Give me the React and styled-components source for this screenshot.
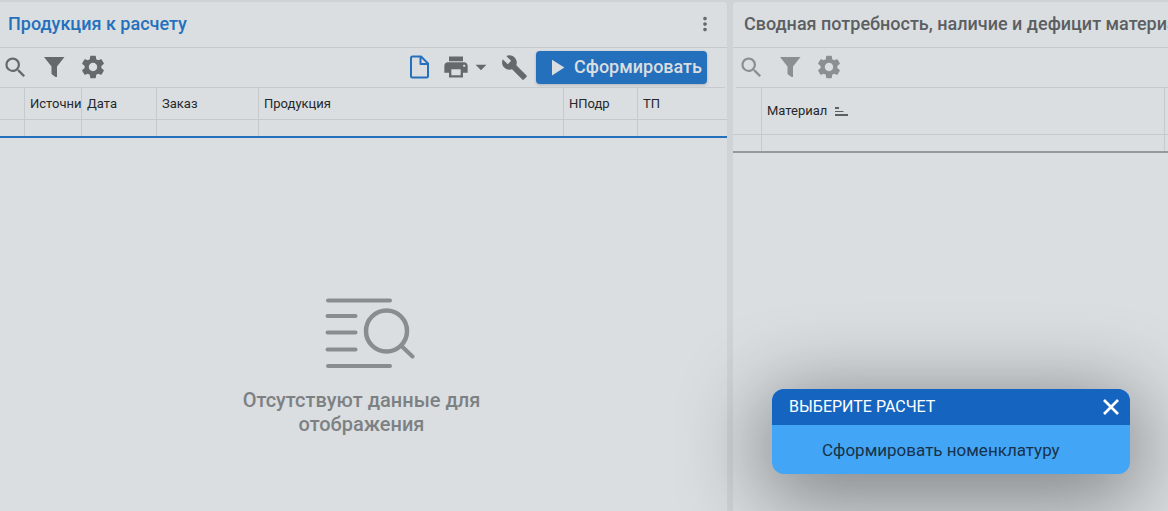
import React from 'react';
import styled, { createGlobalStyle } from 'styled-components';
import {
  MdSearch,
  MdSettings,
  MdPrint,
  MdBuild,
  MdMoreVert,
  MdArrowDropDown,
  MdPlayArrow,
} from 'react-icons/md';

const GlobalStyle = createGlobalStyle`
  * { box-sizing: border-box; }
  html, body, #root { height: 100%; }
  body {
    margin: 0;
    overflow: hidden;
    background: #cfd3d6;
    color: #25282a;
    font-family: Roboto, "Liberation Sans", sans-serif;
  }
  button { font: inherit; color: inherit; }
`;

const Workspace = styled.main`
  position: relative;
  display: grid;
  grid-template-columns: minmax(0, 727fr) minmax(0, 435fr);
  gap: 6px;
  height: 100%;
  padding-top: 2px;
`;

const Panel = styled.section`
  display: flex;
  flex-direction: column;
  min-width: 0;
  overflow: hidden;
  background: #dadee1;
  border-radius: ${(p) => (p.$side === 'left' ? '0 4px 0 0' : '4px 0 0 0')};
`;

const PanelHeader = styled.header`
  display: flex;
  align-items: center;
  justify-content: space-between;
  height: 46px;
  padding: 0 11px 2px ${(p) => p.$inset}px;
  border-bottom: 1px solid #c6cacd;
`;

const PanelTitle = styled.h2`
  margin: 0;
  font-size: 18px;
  line-height: 24px;
  font-weight: 500;
  white-space: nowrap;
  color: ${(p) => (p.$active ? '#2470bd' : '#5c5f61')};
`;

const Toolbar = styled.div`
  display: flex;
  align-items: center;
  justify-content: space-between;
  height: 40px;
  margin: ${(p) => (p.$side === 'left' ? '0 2px 0 0' : '0 0 0 3px')};
  padding: 0 18px 1px 1px;
  border-bottom: 1px solid #c6cacd;
  color: ${(p) => (p.$muted ? '#8b8f91' : '#66696b')};
`;

const ToolGroup = styled.div`
  display: flex;
  align-items: center;
  gap: ${(p) => p.$gap}px;
`;

const IconButton = styled.button`
  display: flex;
  align-items: center;
  justify-content: center;
  width: ${(p) => p.$width || 28}px;
  height: 28px;
  padding: 0;
  border: 0;
  background: none;
  color: ${(p) => (p.$accent ? '#2470bd' : 'inherit')};
  cursor: pointer;
`;

const PrintButton = styled(IconButton)`
  width: 50px;
  justify-content: flex-start;
  & > svg { flex: none; }
  & > svg + svg { margin-left: -2px; }
`;

const PrimaryButton = styled.button`
  display: flex;
  align-items: center;
  gap: 4px;
  height: 33px;
  padding: 0 5px 0 7px;
  border: 0;
  border-radius: 4px;
  background: #2470bd;
  box-shadow: 0 1px 3px rgba(0, 0, 0, 0.2);
  color: #dadee1;
  font-size: 18px;
  font-weight: 500;
  line-height: 24px;
  cursor: pointer;
`;

const DataTable = styled.table`
  width: 100%;
  table-layout: fixed;
  border-collapse: separate;
  border-spacing: 0;
  border-bottom: 2px solid ${(p) => (p.$active ? '#2470bd' : '#95999b')};
`;

const HeadCell = styled.th`
  height: ${(p) => p.$height}px;
  padding: 0 0 0 5px;
  border-right: 1px solid #c6cacd;
  border-bottom: 1px solid #c6cacd;
  font-size: 13px;
  line-height: 16px;
  font-weight: 400;
  text-align: left;
  white-space: nowrap;
  overflow: hidden;
  &:last-child { border-right: 0; }
`;

const FilterCell = styled.td`
  height: 16px;
  padding: 0;
  border-right: 1px solid #c6cacd;
  &:last-child { border-right: 0; }
`;

const SortLabel = styled.span`
  display: flex;
  align-items: center;
  gap: 8px;
`;

const EmptyState = styled.div`
  display: flex;
  flex-direction: column;
  align-items: center;
  padding: 160px 4px 0 0;
  gap: 19px;
`;

const EmptyFigure = styled.div`
  display: flex;
  padding-left: 16px;
`;

const EmptyText = styled.p`
  width: 280px;
  margin: 0;
  color: #7d8183;
  font-size: 20px;
  line-height: 24px;
  font-weight: 500;
  text-align: center;
`;

const Dialog = styled.section`
  position: absolute;
  right: 38px;
  bottom: 37px;
  width: 358px;
  border-radius: 12px;
  background: #42a5f5;
  box-shadow: 0 16px 84px 10px rgba(0, 0, 0, 0.42);
`;

const DialogHeader = styled.header`
  display: flex;
  align-items: center;
  justify-content: space-between;
  height: 36px;
  padding: 0 5px 1px 17px;
  border-radius: 12px 12px 0 0;
  background: #1565c0;
  color: #ffffff;
`;

const DialogTitle = styled.h2`
  margin: 0;
  font-size: 16px;
  line-height: 24px;
  font-weight: 400;
`;

const DialogAction = styled.button`
  display: block;
  width: 100%;
  height: 49px;
  padding: 0 50px;
  border: 0;
  background: none;
  color: #17324a;
  font-size: 17px;
  line-height: 24px;
  text-align: left;
  cursor: pointer;
`;

function FilterIcon() {
  return (
    <svg width="22" height="22" viewBox="0 0 22 22" fill="currentColor" aria-hidden="true">
      <path d="M1 1h20.500l-7.500 9.500v10.500h-1.500l-4-3v-7.500z" />
    </svg>
  );
}

function FileIcon() {
  return (
    <svg width="20" height="24" viewBox="0 0 20 24" fill="none" stroke="currentColor" strokeWidth="2" strokeLinejoin="round" aria-hidden="true">
      <path d="M2.500 1.500h8.500l7 7v12.500a1.500 1.500 0 0 1-1.500 1.500h-14a1.500 1.500 0 0 1-1.500-1.500v-18a1.500 1.500 0 0 1 1.500-1.500z" />
      <path d="M10.500 2v7h7.500" />
    </svg>
  );
}

function CloseIcon() {
  return (
    <svg width="16" height="16" viewBox="0 0 16 16" fill="none" stroke="currentColor" strokeWidth="2.700" aria-hidden="true">
      <path d="M1 1l14 14M15 1L1 15" />
    </svg>
  );
}

function SortIcon() {
  return (
    <svg width="13" height="9" viewBox="0 0 13 9" fill="none" stroke="#5d6062" aria-hidden="true">
      <path d="M0 1h4" strokeWidth="2" />
      <path d="M0 4.500h8.500" strokeWidth="1" />
      <path d="M0 8h13" strokeWidth="2" />
    </svg>
  );
}

function NoDataIcon() {
  return (
    <svg width="90" height="71" viewBox="0 0 90 71" fill="none" stroke="#898d8f" strokeWidth="4" strokeLinecap="round" aria-hidden="true">
      <path d="M3 2.500h62M2.500 18h28M2.500 34.500h28M2.500 51.500h28M3 68h62" />
      <circle cx="61.500" cy="33" r="20.500" strokeWidth="4.500" />
      <path d="M76.500 48l11 10.500" />
    </svg>
  );
}

function GridTools() {
  return (
    <ToolGroup $gap={11}>
      <IconButton aria-label="Поиск"><MdSearch size={27} /></IconButton>
      <IconButton aria-label="Фильтр"><FilterIcon /></IconButton>
      <IconButton aria-label="Настройки"><MdSettings size={28} /></IconButton>
    </ToolGroup>
  );
}

function Grid({ columns, widths, height, active }) {
  return (
    <DataTable $active={active}>
      <colgroup>
        {widths.map((w, i) => <col key={i} style={w ? { width: w } : undefined} />)}
      </colgroup>
      <thead>
        <tr>{columns.map((c, i) => <HeadCell key={i} $height={height}>{c}</HeadCell>)}</tr>
      </thead>
      <tbody>
        <tr>{columns.map((c, i) => <FilterCell key={i} />)}</tr>
      </tbody>
    </DataTable>
  );
}

export default function App() {
  return (
    <>
      <GlobalStyle />
      <Workspace>
        <Panel $side="left">
          <PanelHeader $inset={8}>
            <PanelTitle $active>Продукция к расчету</PanelTitle>
            <IconButton aria-label="Меню" $width={22}><MdMoreVert size={28} color="#66696b" /></IconButton>
          </PanelHeader>
          <Toolbar $side="left">
            <GridTools />
            <ToolGroup $gap={8}>
              <IconButton aria-label="Новый документ" $accent><FileIcon /></IconButton>
              <PrintButton aria-label="Печать">
                <MdPrint size={28} />
                <MdArrowDropDown size={26} />
              </PrintButton>
              <IconButton aria-label="Инструменты"><MdBuild size={27} /></IconButton>
              <PrimaryButton><MdPlayArrow size={27} />Сформировать</PrimaryButton>
            </ToolGroup>
          </Toolbar>
          <Grid
            active
            height={32}
            widths={[25, 57, 75, 102, null, 74, 89]}
            columns={['', 'Источник', 'Дата', 'Заказ', 'Продукция', 'НПодр', 'ТП']}
          />
          <EmptyState>
            <EmptyFigure><NoDataIcon /></EmptyFigure>
            <EmptyText>Отсутствуют данные для отображения</EmptyText>
          </EmptyState>
        </Panel>
        <Panel $side="right">
          <PanelHeader $inset={11}>
            <PanelTitle>Сводная потребность, наличие и дефицит материалов</PanelTitle>
          </PanelHeader>
          <Toolbar $side="right" $muted>
            <GridTools />
          </Toolbar>
          <Grid
            height={47}
            widths={[29, null, 3]}
            columns={['', <SortLabel key="m">Материал<SortIcon /></SortLabel>, '']}
          />
        </Panel>
        <Dialog role="dialog" aria-labelledby="dialog-title">
          <DialogHeader>
            <DialogTitle id="dialog-title">ВЫБЕРИТЕ РАСЧЕТ</DialogTitle>
            <IconButton aria-label="Закрыть"><CloseIcon /></IconButton>
          </DialogHeader>
          <DialogAction>Сформировать номенклатуру</DialogAction>
        </Dialog>
      </Workspace>
    </>
  );
}
